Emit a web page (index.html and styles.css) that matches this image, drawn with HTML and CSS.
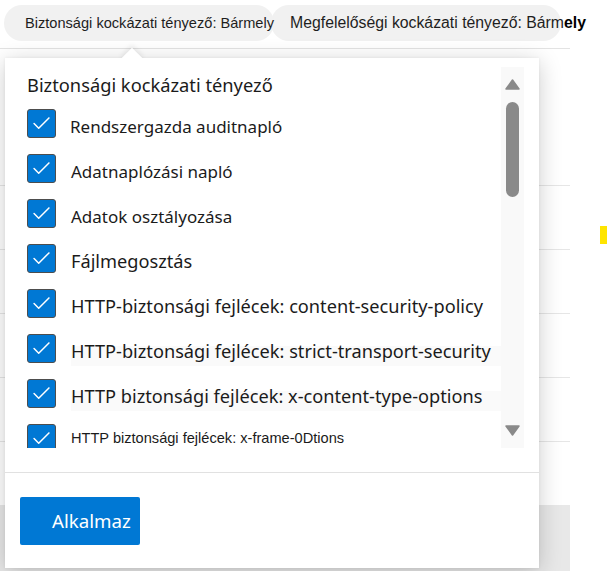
FILE: index.html
```html
<!DOCTYPE html>
<html lang="hu">
<head>
<meta charset="utf-8">
<link rel="stylesheet" href="styles.css">
</head>
<body>
<div class="page">
  <div class="filters">
    <div class="pill pill-a">Biztonsági kockázati tényező: Bármely</div>
    <div class="pill pill-b">Megfelelőségi kockázati tényező: Bárm<b>ely</b></div>
  </div>
  <div class="table">
    <div class="thead"></div>
    <div class="trow"></div>
    <div class="trow"></div>
    <div class="trow"></div>
    <div class="trow"></div>
    <div class="trow last"></div>
    <div class="band"></div>
  </div>

  <div class="panel">
    <div class="beak"></div>
    <div class="panel-body">
      <div class="content">
        <div class="title">Biztonsági kockázati tényező</div>
        <div class="list">
          <div class="row"><span class="cb"><svg viewBox="0 0 29 29"><path d="M6.5 14.5 L11.5 19.5 L22.5 8.5"/></svg></span><span class="label l1">Rendszergazda auditnapló</span></div>
          <div class="row"><span class="cb"><svg viewBox="0 0 29 29"><path d="M6.5 14.5 L11.5 19.5 L22.5 8.5"/></svg></span><span class="label">Adatnaplózási napló</span></div>
          <div class="row"><span class="cb"><svg viewBox="0 0 29 29"><path d="M6.5 14.5 L11.5 19.5 L22.5 8.5"/></svg></span><span class="label">Adatok osztályozása</span></div>
          <div class="row"><span class="cb"><svg viewBox="0 0 29 29"><path d="M6.5 14.5 L11.5 19.5 L22.5 8.5"/></svg></span><span class="label big">Fájlmegosztás</span></div>
          <div class="row"><span class="cb"><svg viewBox="0 0 29 29"><path d="M6.5 14.5 L11.5 19.5 L22.5 8.5"/></svg></span><span class="label big">HTTP-biztonsági fejlécek: content-security-policy</span></div>
          <div class="row"><span class="cb"><svg viewBox="0 0 29 29"><path d="M6.5 14.5 L11.5 19.5 L22.5 8.5"/></svg></span><span class="label big hl">HTTP-biztonsági fejlécek: strict-transport-security</span></div>
          <div class="row"><span class="cb"><svg viewBox="0 0 29 29"><path d="M6.5 14.5 L11.5 19.5 L22.5 8.5"/></svg></span><span class="label big hl">HTTP biztonsági fejlécek: x-content-type-options</span></div>
          <div class="row"><span class="cb"><svg viewBox="0 0 29 29"><path d="M6.5 14.5 L11.5 19.5 L22.5 8.5"/></svg></span><span class="label small">HTTP biztonsági fejlécek: x-frame-0Dtions</span></div>
        </div>
      </div>
      <div class="scroll">
        <svg class="arrow up" viewBox="0 0 15 11"><path d="M7.5 1 L14 10 L1 10 Z"/></svg>
        <div class="thumb"></div>
        <svg class="arrow down" viewBox="0 0 15 11"><path d="M1 1 L14 1 L7.5 10 Z"/></svg>
      </div>
    </div>
    <div class="footer">
      <button class="apply">Alkalmaz</button>
    </div>
  </div>

  <div class="marker"></div>
</div>
</body>
</html>
```

FILE: styles.css
```css
html, body {
  margin: 0;
  padding: 0;
  background: #fff;
}
body {
  width: 607px;
  height: 571px;
  overflow: hidden;
}
.page {
  position: relative;
  width: 607px;
  height: 571px;
  font-family: "Noto Sans", "DejaVu Sans", sans-serif;
  color: #1b1b1b;
}

/* filter pills */
.filters {
  display: flex;
  align-items: flex-start;
  width: 570px;
  height: 49px;
  box-sizing: border-box;
  padding: 5px 0 0 4px;
  border-bottom: 1px solid #e3e3e3;
  font-family: "Liberation Sans", Arial, sans-serif;
  white-space: nowrap;
}
.pill {
  flex: none;
  height: 36px;
  line-height: 36px;
  border-radius: 18px;
  background: #f1f1f1;
  color: #1e1e1e;
  box-sizing: border-box;
}
.pill-a {
  position: relative;
  z-index: 1;
  font-size: 14.6px;
  padding: 0 0 0 21px;
}
.pill-b {
  font-size: 15.8px;
  padding: 0 0 0 19px;
  margin-left: -3px;
  width: 290px;
}
.pill-b b {
  font-weight: 700;
  color: #000;
}

/* background table */
.table {
  width: 570px;
}
.thead {
  height: 136px;
  border-bottom: 1px solid #e6e6e6;
}
.trow {
  height: 63px;
  border-bottom: 1px solid #e6e6e6;
}
.trow.last {
  border-bottom: none;
}
.band {
  height: 66px;
  background: #e8e8e8;
}

/* dropdown panel */
.panel {
  position: absolute;
  left: 5px;
  top: 58px;
  width: 534px;
  height: 510px;
  background: #fff;
  box-shadow: 0 4px 22px rgba(0, 0, 0, 0.2), 0 0 3px rgba(0, 0, 0, 0.06);
  display: flex;
  flex-direction: column;
}
.beak {
  position: absolute;
  left: 119px;
  top: -7px;
  width: 16px;
  height: 16px;
  background: #fff;
  transform: rotate(45deg);
  box-shadow: -2px -2px 5px rgba(0, 0, 0, 0.08);
}
.panel-body {
  position: relative;
  display: flex;
  height: 414px;
  box-sizing: border-box;
  padding: 9px 15px 0 22px;
  background: #fff;
}
.content {
  flex: 1;
  min-width: 0;
}
.title {
  margin-top: 6px;
  font-size: 18.3px;
  line-height: 23px;
  color: #1b1b1b;
}
.list {
  margin-top: 13px;
  height: 339px;
  overflow: hidden;
}
.row {
  display: flex;
  align-items: flex-start;
  height: 45px;
}
.cb {
  flex: none;
  width: 29px;
  height: 29px;
  box-sizing: border-box;
  border: 1px solid #4d4d4d;
  border-radius: 3px;
  background: #0078d4;
}
.cb svg {
  display: block;
  width: 27px;
  height: 27px;
}
.cb path {
  fill: none;
  stroke: #fff;
  stroke-width: 1.6;
  stroke-linecap: round;
  stroke-linejoin: round;
}
.label {
  flex: 1;
  margin-left: 15px;
  padding-top: 3px;
  font-size: 17px;
  line-height: 29px;
  white-space: nowrap;
  color: #1b1b1b;
}
.label.l1 {
  margin-left: 14px;
}
.label.big {
  font-size: 18.2px;
}
.label.hl {
  background: linear-gradient(#fff 0, #fff 12px, #fafafa 12px, #fafafa 35px, #fff 35px);
}
.label.small {
  font-family: "Liberation Sans", Arial, sans-serif;
  font-size: 14.6px;
  padding-top: 0;
}

/* scrollbar */
.scroll {
  flex: none;
  width: 23px;
  height: 381px;
  background: #f9f9f9;
  display: flex;
  flex-direction: column;
  align-items: center;
}
.arrow {
  display: block;
  width: 15px;
  height: 11px;
}
.arrow path {
  fill: #8a8a8a;
  stroke: #8a8a8a;
  stroke-width: 1.5;
  stroke-linejoin: round;
}
.arrow.up {
  margin-top: 12px;
}
.thumb {
  margin-top: 12px;
  width: 13px;
  height: 95px;
  border-radius: 7px;
  background: #8a8a8a;
}
.arrow.down {
  margin-top: auto;
  margin-bottom: 12px;
}

/* footer */
.footer {
  border-top: 1px solid #e1e1e1;
  padding: 24px 0 0 15px;
}
.apply {
  display: block;
  width: 120px;
  height: 48px;
  margin: 0;
  padding: 0 0 0 32px;
  border: none;
  border-radius: 2px;
  background: #0078d4;
  color: #fff;
  text-align: left;
  font-family: "Noto Sans", "DejaVu Sans", sans-serif;
  font-size: 18.7px;
  line-height: 48px;
}

.marker {
  position: absolute;
  left: 600px;
  top: 226px;
  width: 7px;
  height: 18px;
  background: #ffe500;
}
```
